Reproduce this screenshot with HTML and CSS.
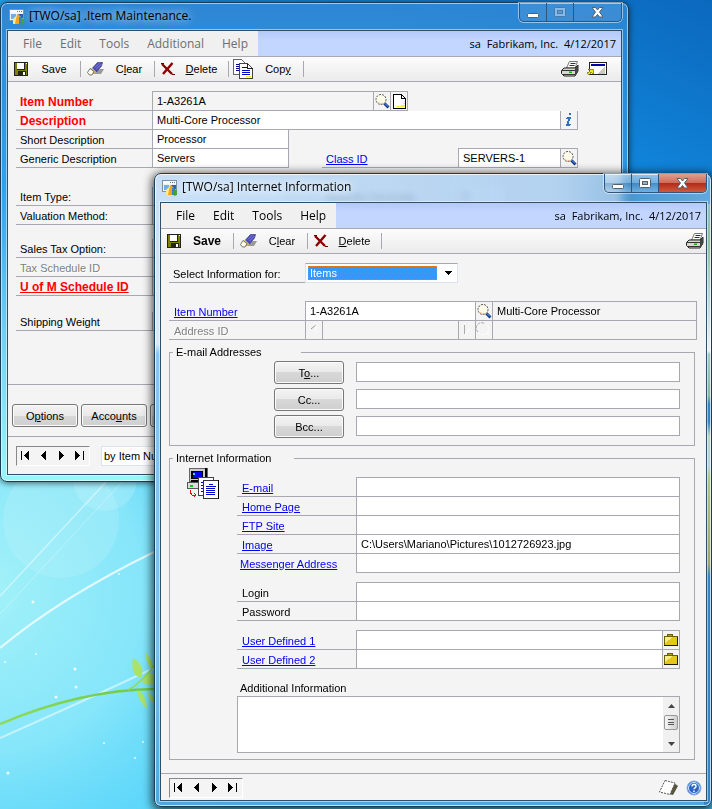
FILE: index.html
```html
<!DOCTYPE html>
<html lang="en">
<head>
<meta charset="utf-8">
<title>Item Maintenance</title>
<link rel="stylesheet" href="styles.css">
</head>
<body>
<svg class="defs" width="0" height="0" aria-hidden="true">
  <symbol id="i-app" viewBox="0 0 16 16">
    <rect x="0.5" y="0.5" width="14" height="11" fill="#e9f3fc" stroke="#7d90a4"/>
    <path d="M1 2.500h13" stroke="#fff" stroke-width="2"/><path d="M8 2.500h1M10 2.500h1M12 2.500h1" stroke="#5a7690"/>
    <rect x="2" y="5" width="5" height="5" fill="#6faee6"/>
    <path d="M4 15v-5l3-3v8z" fill="#ffe98a"/><path d="M6 15l2-10 3 1v9z" fill="#f6a41c"/>
    <path d="M10 15V8l3-1v8z" fill="#3b7fc8"/><path d="M12 16v-6h3v5z" fill="#3da23d"/><path d="M9 5h5v5z" fill="#2b5fa8"/>
  </symbol>
  <symbol id="i-save" viewBox="0 0 14 14" shape-rendering="crispEdges">
    <rect width="14" height="14" fill="#222"/><rect x="1" y="1" width="12" height="12" fill="#808000"/>
    <rect x="3" y="1" width="8" height="7" fill="#222"/><rect x="3" y="1" width="7" height="6" fill="#fff"/>
    <rect x="12" y="1" width="1" height="1" fill="#fff"/>
    <rect x="4" y="9" width="8" height="5" fill="#222"/><rect x="9" y="10" width="2" height="3" fill="#fff"/>
  </symbol>
  <symbol id="i-clear" viewBox="0 0 17 14">
    <path d="M5 12h9l3-5h-4z" fill="#999"/>
    <path d="M5.500 6L10.500.500h5l-1 3.500-5 6z" fill="#4c4cb8" stroke="#333380" stroke-width=".7"/>
    <path d="M8 5.500l5-5M9.500 7l5-5" stroke="#9c9ce0" stroke-width=".7"/>
    <path d="M4 6l5 4-1 2-6-3z" fill="#d8b040"/>
    <path d="M3 6.500l4 3L5 13H2.500L.5 10.500z" fill="#fffde8" stroke="#555" stroke-width=".8"/>
  </symbol>
  <symbol id="i-del" viewBox="0 0 14 14">
    <path d="M1 2l10 10M11.500 1L2 12" stroke="#8c0000" stroke-width="2.400" fill="none"/><path d="M0 1.500h3M11 12.500h3" stroke="#600"/>
  </symbol>
  <symbol id="i-copy" viewBox="0 0 20 20" shape-rendering="crispEdges">
    <path d="M.5.500h8l4 4v11H.5z" fill="#fff" stroke="#666"/>
    <path d="M3 5.500h3M3 7.500h3M3 9.500h3M3 11.500h3" stroke="#008"/>
    <path d="M6.500 4.500h8l5 5v10h-13z" fill="#fff" stroke="#444"/><path d="M14.500 4.500v5h5" fill="none" stroke="#222"/>
    <path d="M9 8.500h5M9 11.500h8M9 13.500h8M9 15.500h8" stroke="#00c"/><path d="M13 17.500h5" stroke="#fe3"/>
  </symbol>
  <symbol id="i-print" viewBox="0 0 18 16">
    <path d="M5.500 7L8.500.500h8L14 7z" fill="#fff" stroke="#777"/>
    <path d="M9.500 2.500h5M8.500 4.500h5" stroke="#22a"/>
    <path d="M3 7h11l3-3v6l-3 5H3L.5 12.500v-3z" fill="#d8d8d0" stroke="#222"/>
    <path d="M14 7l3-3v7l-3 4z" fill="#444"/><path d="M1 9.500h13M1 13.500h13" stroke="#333"/>
    <rect x="8" y="10.500" width="3" height="1.500" fill="#0b0"/>
  </symbol>
  <symbol id="i-goto" viewBox="0 0 20 14" shape-rendering="crispEdges">
    <rect x="2.500" y=".5" width="17" height="12" fill="#fff" stroke="#222"/>
    <rect x="4" y="2" width="14" height="2" fill="#00a"/><path d="M10 12l8-7v7z" fill="#c9c9c9"/>
    <path d="M1 7h5v5L4 10l-2 3-2-2 3-2z" fill="#f5e614" stroke="#660" stroke-width=".7"/>
  </symbol>
  <symbol id="i-look" viewBox="0 0 16 16">
    <circle cx="7" cy="6.500" r="5" fill="#fffbe9" stroke="#555" stroke-dasharray="2 1"/>
    <path d="M4 9.500a5 5 0 0 0 5 1" stroke="#f0b890" fill="none"/>
    <path d="M10.500 10.500l4 4" stroke="#123a8c" stroke-width="3"/><path d="M11 10.500l3 3" stroke="#6aa2f0"/>
  </symbol>
  <symbol id="i-note" viewBox="0 0 13 15" shape-rendering="crispEdges">
    <path d="M.5.500h8l4 4v10H.5z" fill="#fff" stroke="#000"/><path d="M8.500.500v4h4" fill="none" stroke="#000"/>
    <path d="M3 12.500h9M8 11.500h4M10 9.500h2M11 7.500h1" stroke="#ffee3a"/>
  </symbol>
  <symbol id="i-info" viewBox="0 0 8 14" shape-rendering="crispEdges">
    <path d="M4 0h2v2H4zM2 4h4v2H5v2H4v3h2v1H5v1H1v-2h1V8h1V6H1V5h1z" fill="#2e6fc4"/>
  </symbol>
  <symbol id="i-first" viewBox="0 0 10 10" shape-rendering="crispEdges"><path d="M0 0h1v9H0zM8 0v9L3 4.500z"/></symbol>
  <symbol id="i-prev" viewBox="0 0 10 10" shape-rendering="crispEdges"><path d="M7 0v9L2 4.500z"/></symbol>
  <symbol id="i-next" viewBox="0 0 10 10" shape-rendering="crispEdges"><path d="M2 0v9l5-4.500z"/></symbol>
  <symbol id="i-last" viewBox="0 0 10 10" shape-rendering="crispEdges"><path d="M8 0h1v9H8zM0 0v9l5-4.500z"/></symbol>
  <symbol id="i-folder" viewBox="0 0 14 12" shape-rendering="crispEdges">
    <path d="M3 3V1l1-1h4l1 2v1z" fill="#b5a000" stroke="#6b6000"/>
    <rect x=".5" y="2.500" width="13" height="9" fill="#e3c81c" stroke="#6b6000"/><path d="M1 9l8-6H1z" fill="#f6ec8a"/>
    <path d="M0 11.500h14M13.500 3v9" stroke="#221f00"/>
  </symbol>
  <symbol id="i-min" viewBox="0 0 13 11"><rect x=".5" y="6.500" width="11" height="4" rx="1" fill="#fff" stroke="#52606e"/></symbol>
  <symbol id="i-max" viewBox="0 0 13 11"><rect x=".5" y=".5" width="11" height="9" rx="1" fill="#fff" stroke="#52606e"/><rect x="3.500" y="3.500" width="5" height="3" fill="#8fb2d0" stroke="#52606e"/></symbol>
  <symbol id="i-close" viewBox="0 0 13 11"><path d="M1 .5h3.500l2 2.500 2-2.500H12L8.500 5l3.500 5H8.500l-2-2.500-2 2.500H1L4.500 5z" fill="#fff" stroke="#52606e"/></symbol>
</svg>

<svg class="wallpaper" viewBox="0 0 712 809" preserveAspectRatio="xMidYMid slice" aria-hidden="true">
  <defs>
    <linearGradient id="sky" x1="1" y1="0" x2=".55" y2="1"><stop offset="0" stop-color="#0b68bd"/><stop offset=".25" stop-color="#1189de"/><stop offset=".55" stop-color="#3fbdf2"/><stop offset="1" stop-color="#54d2fa"/></linearGradient>
    <radialGradient id="glow" gradientUnits="userSpaceOnUse" cx="-20" cy="590" r="330"><stop offset="0" stop-color="#a4f2f8"/><stop offset=".5" stop-color="#8be8fa" stop-opacity=".9"/><stop offset="1" stop-color="#66dcfa" stop-opacity="0"/></radialGradient>
    <linearGradient id="stem" x1="0" x2="1"><stop offset="0" stop-color="#8edb5c"/><stop offset="1" stop-color="#6fc644"/></linearGradient>
  </defs>
  <rect width="712" height="809" fill="url(#sky)"/>
  <rect width="712" height="809" fill="url(#glow)"/>
  <circle cx="61" cy="520" r="58" fill="#c5f4fb" opacity=".25"/><circle cx="105" cy="479" r="32" fill="#d0f8fc" opacity=".25"/>
  <g fill="none" stroke="#fff">
    <path d="M0 596L106 482" opacity=".45" stroke-width="1.500"/><path d="M0 614L122 482" opacity=".3"/>
    <path d="M0 648Q60 598 154 552" opacity=".75" stroke-width="2"/>
    <path d="M0 738Q75 705 154 668" opacity=".5" stroke-width="2"/>
  </g>
  <path d="M0 724Q80 690 155 689" fill="none" stroke="url(#stem)" stroke-width="2.500"/>
  <g fill="#a9e36a"><path d="M133 658q13 8 8 20-11-3-8-20zM145 652q10 10 8 17-7-3-8-17zM142 682q2-12 12-8v10q-8 2-12-2zM137 690q9 3 10 19-8-6-10-19zM147 692q6 1 8 12-6-3-8-12z"/></g>
  <path d="M128 690q12-6 26-24" fill="none" stroke="#8edb5c" stroke-width="1.500"/>
  <g fill="#fff" opacity=".85"><circle cx="33" cy="602" r="1.500"/><circle cx="75" cy="669" r="1.500"/><circle cx="76" cy="687" r="1.500"/><circle cx="56" cy="697" r="1.500"/><circle cx="5" cy="662" r="1"/><circle cx="119" cy="574" r="1"/><circle cx="104" cy="743" r="1"/><circle cx="135" cy="758" r="1"/><circle cx="36" cy="654" r="1"/><circle cx="8" cy="773" r="1.500"/><circle cx="143" cy="742" r="1"/></g>
</svg>

<section class="window back">
  <header class="title">
    <svg class="app"><use href="#i-app"/></svg><h1>[TWO/sa] .Item Maintenance.</h1>
    <div class="caption">
      <button aria-label="Minimize"><svg><use href="#i-min"/></svg></button><button aria-label="Maximize" disabled><svg><use href="#i-max"/></svg></button><button class="x" aria-label="Close"><svg><use href="#i-close"/></svg></button>
    </div>
  </header>
  <div class="client">
    <div class="menubar">
      <nav><button>File</button><button>Edit</button><button>Tools</button><button>Additional</button><button>Help</button></nav>
      <p>sa&nbsp; Fabrikam, Inc.&nbsp; 4/12/2017</p>
    </div>
    <div class="toolbar">
      <button><svg class="s14"><use href="#i-save"/></svg><span>Save</span></button>
      <button><svg class="s17"><use href="#i-clear"/></svg><span>C<u>l</u>ear</span></button>
      <button><svg class="s14"><use href="#i-del"/></svg><span><u>D</u>elete</span></button>
      <button class="copy"><svg class="s20"><use href="#i-copy"/></svg><span>Cop<u>y</u></span></button>
      <div class="right"><button aria-label="Print"><svg class="s18"><use href="#i-print"/></svg></button><button aria-label="Go to"><svg class="goto"><use href="#i-goto"/></svg></button></div>
    </div>
    <form class="item">
      <div class="row first"><label class="req" for="num">Item Number</label><input id="num" class="w-num gray" value="1-A3261A"><button type="button" aria-label="Lookup"><svg class="s16"><use href="#i-look"/></svg></button><button type="button" aria-label="Note"><svg class="note"><use href="#i-note"/></svg></button></div>
      <div class="row"><label class="req" for="desc">Description</label><input id="desc" class="w-desc" value="Multi-Core Processor"><button type="button" aria-label="Information"><svg class="info"><use href="#i-info"/></svg></button></div>
      <div class="row"><label for="short">Short Description</label><input id="short" class="w-short" value="Processor"></div>
      <div class="row"><label for="gen">Generic Description</label><input id="gen" class="w-short" value="Servers"><span class="gap"></span><label for="cls"><a href="#">Class ID</a></label><input id="cls" class="w-class top" value="SERVERS-1"><button type="button" class="top" aria-label="Class lookup"><svg class="s16"><use href="#i-look"/></svg></button></div>
      <div class="row space"><label for="type">Item Type:</label><input id="type" class="w-short" value=""><span class="gap"></span><label for="qd">Quantity Decimals:</label><input id="qd" class="w-qd" value="0"></div>
      <div class="row"><label for="val">Valuation Method:</label><input id="val" class="w-short"></div>
      <div class="row mid"><label for="tax">Sales Tax Option:</label><input id="tax" class="w-short"></div>
      <div class="row"><label class="dim" for="sched">Tax Schedule ID</label><input id="sched" class="w-short" disabled></div>
      <div class="row"><label class="req" for="uom"><a href="#">U of M Schedule ID</a></label><input id="uom" class="w-short"></div>
      <div class="row ship"><label for="ship">Shipping Weight</label><input id="ship" class="w-short"></div>
    </form>
    <div class="actions"><button class="push">O<u>p</u>tions</button><button class="push">Acco<u>u</u>nts</button><button class="push"></button></div>
    <footer class="status">
      <div class="pager"><button aria-label="First"><svg><use href="#i-first"/></svg></button><button aria-label="Previous"><svg><use href="#i-prev"/></svg></button><button aria-label="Next"><svg><use href="#i-next"/></svg></button><button aria-label="Last"><svg><use href="#i-last"/></svg></button></div>
      <select class="sort" aria-label="Sort"><option>by Item Number</option></select>
    </footer>
  </div>
</section>

<section class="window front">
  <header class="title">
    <svg class="app"><use href="#i-app"/></svg><h1>[TWO/sa] Internet Information</h1>
    <div class="caption">
      <button aria-label="Minimize"><svg><use href="#i-min"/></svg></button><button aria-label="Maximize"><svg><use href="#i-max"/></svg></button><button class="x" aria-label="Close"><svg><use href="#i-close"/></svg></button>
    </div>
  </header>
  <div class="client">
    <div class="menubar">
      <nav><button>File</button><button>Edit</button><button>Tools</button><button>Help</button></nav>
      <p>sa&nbsp; Fabrikam, Inc.&nbsp; 4/12/2017</p>
    </div>
    <div class="toolbar">
      <button class="strong"><svg class="s14"><use href="#i-save"/></svg><span>Save</span></button>
      <button><svg class="s17"><use href="#i-clear"/></svg><span>C<u>l</u>ear</span></button>
      <button><svg class="s14"><use href="#i-del"/></svg><span><u>D</u>elete</span></button>
      <div class="right"><button aria-label="Print"><svg class="s18"><use href="#i-print"/></svg></button></div>
    </div>
    <form class="net">
      <div class="row choose"><label for="for">Select Information for:</label><span class="combo"><select id="for"><option>Items</option></select><svg viewBox="0 0 7 4" shape-rendering="crispEdges"><path d="M0 0h7L3.500 4z"/></svg></span></div>
      <div class="row item-row"><label for="inum"><a href="#">Item Number</a></label><input id="inum" class="w-item" value="1-A3261A"><button type="button" aria-label="Lookup"><svg class="s16"><use href="#i-look"/></svg></button><output class="grow">Multi-Core Processor</output></div>
      <div class="row"><label class="dim" for="addr">Address ID</label><button type="button" disabled aria-label="Previous address"><svg class="s16" viewBox="0 0 16 16"><path d="M5 7l5-4" stroke="#999"/><path d="M10 3v8" stroke="#fff"/></svg></button><input id="addr" class="w-addr gray" disabled><button type="button" disabled aria-label="Next address"><svg class="s16" viewBox="0 0 16 16"><path d="M5.500 3v9" stroke="#aaa"/><path d="M6 12l5-5" stroke="#fff"/></svg></button><button type="button" disabled aria-label="Address lookup"><svg class="s16" viewBox="0 0 16 16" fill="none"><path d="M2 10a5 5 0 0 1 7-8" stroke="#aaa" stroke-dasharray="3 1"/><path d="M11 3a5 5 0 0 1-8 8m8 0l3 3" stroke="#fff" stroke-dasharray="3 1"/></svg></button><output class="grow"></output></div>

      <fieldset class="mail">
        <legend>E-mail Addresses</legend>
        <div class="addr"><button type="button" class="push">T<u>o</u>...</button><input aria-label="To"></div>
        <div class="addr"><button type="button" class="push">Cc...</button><input aria-label="Cc"></div>
        <div class="addr"><button type="button" class="push">Bcc...</button><input aria-label="Bcc"></div>
      </fieldset>

      <fieldset class="web">
        <legend>Internet Information</legend>
        <div class="cols">
        <svg class="pc" viewBox="0 0 32 32" shape-rendering="crispEdges">
          <path d="M3 1h17v13H2V3z" fill="#ccc" stroke="#666"/><path d="M19 1v13H4" fill="none" stroke="#000" stroke-width="2"/>
          <rect x="4" y="4" width="12" height="8" fill="#000"/><rect x="6" y="5" width="9" height="6" fill="#00e"/><rect x="6" y="6" width="2" height="2" fill="#2dd"/>
          <rect x="0" y="15" width="18" height="6" fill="#ddd" stroke="#555"/><rect x="3" y="18" width="3" height="2" fill="#0c0"/>
          <rect x="11.500" y="10.500" width="15" height="18" fill="#fff" stroke="#444"/><path d="M14 15.500h3M14 18.500h3M14 21.500h3M14 24.500h3" stroke="#00c"/>
          <rect x="16.500" y="13.500" width="15" height="18" fill="#fff" stroke="#333"/><path d="M31.500 13v19H16" fill="none" stroke="#000"/>
          <path d="M22 17.500h4M19 19.500h10M19 21.500h9M19 23.500h9M19 25.500h9M19 27.500h9" stroke="#00c"/>
          <path d="M4 23l-1 2 2 3h4M7 26l2 2-2 2" fill="none" stroke="#e00"/>
        </svg>
        <div class="fields">
          <div class="row first"><label for="em"><a href="#">E-mail</a></label><input id="em" class="grow"></div>
          <div class="row"><label for="hp"><a href="#">Home Page</a></label><input id="hp" class="grow"></div>
          <div class="row"><label for="ftp"><a href="#">FTP Site</a></label><input id="ftp" class="grow"></div>
          <div class="row"><label for="img"><a href="#">Image</a></label><input id="img" class="grow" value="C:\Users\Mariano\Pictures\1012726923.jpg"></div>
          <div class="row plain"><label for="msg"><a href="#">Messenger Address</a></label><input id="msg" class="grow"></div>
          <div class="row first sep"><label for="log">Login</label><input id="log" class="grow"></div>
          <div class="row"><label for="pw">Password</label><input id="pw" type="password" class="grow"></div>
          <div class="row first sep"><label for="u1"><a href="#">User Defined 1</a></label><input id="u1" class="grow"><button type="button" aria-label="Browse 1"><svg class="folder"><use href="#i-folder"/></svg></button></div>
          <div class="row"><label for="u2"><a href="#">User Defined 2</a></label><input id="u2" class="grow"><button type="button" aria-label="Browse 2"><svg class="folder"><use href="#i-folder"/></svg></button></div>
          <label class="more" for="add">Additional Information</label>
          <div class="memo"><textarea id="add"></textarea>
            <div class="scroll" aria-hidden="true"><svg viewBox="0 0 7 4"><path d="M0 4h7L3.500 0z"/></svg><span><i></i><i></i><i></i></span><svg viewBox="0 0 7 4"><path d="M0 0h7L3.500 4z"/></svg></div>
          </div>
        </div>
        </div>
      </fieldset>
    </form>
    <footer class="status">
      <div class="pager"><button aria-label="First"><svg><use href="#i-first"/></svg></button><button aria-label="Previous"><svg><use href="#i-prev"/></svg></button><button aria-label="Next"><svg><use href="#i-next"/></svg></button><button aria-label="Last"><svg><use href="#i-last"/></svg></button></div>
      <div class="right">
        <button aria-label="Record note"><svg class="page" viewBox="0 0 19 16"><path d="M15 3l4 3-5 9-4-1z" fill="#555540"/><path d="M6 .5l10 2.500-5 11.500L.5 12z" fill="#fff" stroke="#555" stroke-dasharray="2 1"/></svg></button>
        <button aria-label="Help"><svg class="help" viewBox="0 0 16 16"><circle cx="8" cy="8" r="7" fill="#2765c8" stroke="#8fb4e8"/><circle cx="8" cy="8" r="5.500" fill="none" stroke="#dbe8fa"/><path d="M6 6.500q0-2 2-2t2 1.700q0 1-1 1.600t-1 1.400M8 10.500v1.500" fill="none" stroke="#fff" stroke-width="1.500"/></svg></button>
      </div>
    </footer>
  </div>
</section>
</body>
</html>
```
FILE: styles.css
```css
* { box-sizing: border-box; }
body {
  margin: 0;
  min-height: 100vh;
  position: relative;
  overflow: hidden;
  font: 11px/14px "Liberation Sans", Arial, sans-serif;
  color: #000;
  background: #54d2fa;
}
h1, p { margin: 0; font-weight: normal; }
button, input, select, textarea { font: inherit; color: inherit; margin: 0; border-radius: 0; }
button { background: none; border: 0; padding: 0; }
svg { display: block; flex: none; }
a { color: #0000f0; text-decoration: underline; }
.defs { position: absolute; }
.wallpaper { position: absolute; inset: 0; width: 100%; height: 100%; }

/* Windows on the desktop */
.window {
  position: absolute;
  border: 1px solid #1b3c55;
  border-radius: 7px;
  padding: 0 6px 6px;
}
.back {
  left: 0; right: 83px; top: 2px;
  background: linear-gradient(90deg, transparent 60%, rgba(30,120,200,.25)), linear-gradient(#2f86d3, #2d8cd9 40px, #2fa3ee 190px, #6fd0f5 330px, #9af6f8);
  box-shadow: inset 0 0 0 1px rgba(255,255,255,.55), 0 1px 6px rgba(0,0,0,.6);
}
.front {
  left: 154px; right: 0; top: 173px;
  padding: 0 4px 5px 5px;
  background:
    linear-gradient(90deg, rgba(190,218,245,.8), rgba(160,200,238,.75) 72%, rgba(85,155,212,.6) 86%, rgba(120,175,220,.7)) 0 0 / 100% 30px no-repeat,
    linear-gradient(transparent 30px, #8fc0c8 30px, #8fc0a4 70px, #b9dce8 130px, #e9f2fa 177px, #9fcbd0 180px, #84b8a8 222px, #2f86c9 230px, #2f86c9 248px, #b4d6c8 262px, #b0d4e8 292px, #a8cc88 302px, #98a868 390px, #2f86c9 402px) 100% 0 / 7px 100% no-repeat,
    linear-gradient(rgba(200,222,245,.2) 30px, #c9dff4 30px, #dbe9f6 170px, #8cc4ee 180px, #7abfe9 480px, #4ea6dc);
  backdrop-filter: blur(3px);
  box-shadow: inset 0 0 0 1px rgba(255,255,255,.7), 0 2px 10px 2px rgba(0,0,0,.7);
}
.title { display: flex; align-items: flex-start; height: 27px; padding-left: 2px; }
.front .title { height: 28px; }
.title .app { width: 16px; height: 16px; margin: 6px 4px 0 0; }
.title h1 { flex: 1; font: 12px/16px "Open Sans", sans-serif; margin-top: 5px; white-space: nowrap; text-shadow: 0 0 8px #fff, 0 0 10px rgba(255,255,255,.8); }
.back .title h1 { text-shadow: 0 0 8px rgba(255,255,255,.7), 0 0 12px rgba(255,255,255,.6); }
.caption { display: flex; border: 1px solid #2d567c; border-top: 0; border-radius: 0 0 5px 5px; overflow: hidden; box-shadow: 0 0 0 1px rgba(255,255,255,.5); }
.caption button { width: 27px; height: 18px; display: grid; place-items: center; border-right: 1px solid #2d567c; background: linear-gradient(rgba(255,255,255,.4), rgba(255,255,255,.2) 50%, rgba(0,50,100,.15) 50%, rgba(255,255,255,.2)); }
.caption .x { width: 47px; border-right: 0; }
.front .caption .x { background: linear-gradient(#e0a090, #cf6a58 50%, #b02a18 50%, #cf5a3c); }
.caption svg { width: 13px; height: 11px; }
.back .caption button { background: rgba(255,255,255,.08); }
.caption button:disabled svg { opacity: .4; }
.client { border: 1px solid #2f4f68; background: #f4f4f4; box-shadow: 0 0 0 1px rgba(255,255,255,.5); }

.menubar { display: flex; height: 26px; border-bottom: 1px solid #a8a8b0; background: linear-gradient(#b3c9fa, #c3d6ff 40%); font: 12px/24px "Open Sans", sans-serif; }
.menubar nav { display: flex; gap: 18px; padding: 0 10px 0 15px; background: #f0f0f0; }
.back .menubar nav { color: #6e6e6e; }
.menubar p { margin-left: auto; padding: 1px 5px 0 0; font-size: 11px; }

.toolbar { display: flex; align-items: center; height: 25px; padding-left: 6px; border-bottom: 1px solid #a8a8b0; background: linear-gradient(#fcfcfc, #ebebeb); }
.toolbar > button { display: flex; align-items: center; height: 16px; width: 74px; border-right: 1px solid #a8a8b0; padding-left: 6px; }
.toolbar > button:first-child { width: 67px; padding-left: 0; }
.toolbar > button span { flex: 1; text-align: center; }
.toolbar > .copy { width: 75px; padding-left: 4px; }
.toolbar .strong { font-weight: bold; font-size: 12px; }
.s14 { width: 14px; height: 14px; }
.s16 { width: 16px; height: 16px; }
.s17 { width: 17px; height: 14px; }
.s18 { width: 18px; height: 16px; }
.s20 { width: 20px; height: 20px; }
.goto { width: 20px; height: 14px; }
.note { width: 13px; height: 15px; }
.info { width: 8px; height: 14px; }
.folder { width: 14px; height: 12px; }
.right { display: flex; align-items: center; gap: 8px; margin-left: auto; }
.toolbar .right { padding-right: 14px; }
.front .toolbar .right { padding-right: 2px; }

/* Field rows */
.row { display: flex; height: 19px; }
.row.first { height: 20px; }
.row > * { border: 0 solid #a8a8b0; border-bottom-width: 1px; }
.row label { flex: 0 0 136px; padding: 3px 0 0 4px; white-space: nowrap; }
.row.first label { padding-top: 4px; }
.row input, .row output { min-width: 0; padding: 0 4px 1px; background-color: #fff; border-left-width: 1px; outline: 0; }
.row.first > :not(label), .row .top, .item-row > :not(label) { border-top-width: 1px; }
.row > button { flex: 0 0 17px; display: grid; place-items: center; border-left-width: 1px; overflow: hidden; }
.row > button:last-child, .row > input:last-child, .row > output:last-child, .row > .w-short { border-right-width: 1px; }
.row > button:last-child { flex-basis: 18px; }
.row .gray, .row output { background-color: #f4f4f4; }
.row .grow { flex: 1; }
.row output { padding-top: 2px; }
.row .gap { flex: 0 0 33px; border: 0; }
.row .top { height: 20px; margin-top: -1px; }
.req, .row .req { font-weight: bold; font-size: 12px; color: #f00; }
.req a { color: #f00; }
.dim { color: #808080; text-shadow: 1px 1px #fff; }
.w-num { width: 221px; } .w-desc { width: 408px; } .w-short { width: 137px; } .w-class { width: 102px; } .w-qd { width: 50px; }
.w-item { width: 170px; } .w-addr { width: 136px; }

.item { padding: 9px 8px 53px; }
.space { margin-top: 19px; }
.mid { margin-top: 14px; }
.ship { margin-top: 16px; }
.actions { display: flex; gap: 3px; border-top: 1px solid #a8a8b0; padding: 19px 4px 9px; }
.push { flex: 0 0 66px; height: 23px; border: 1px solid #777; border-radius: 3px; background: linear-gradient(#f3f3f3, #e9e9e9 50%, #d8d8d8 50%, #cfcfcf); box-shadow: inset 0 0 0 1px #fbfbfb; }
.status { display: flex; border-top: 1px solid #a8a8b0; padding: 9px 8px 8px; }
.pager { display: flex; width: 74px; height: 20px; border: 1px solid; border-color: #888 #fff #fff #888; }
.pager button { flex: 1; display: grid; place-items: center; }
.pager svg { width: 10px; height: 10px; }
.sort { appearance: none; margin-left: 11px; width: 137px; height: 20px; border: 1px solid #dde3ee; background: #fff; padding: 0 2px; }

/* Internet Information window */
.net { padding: 9px 11px 13px 8px; }
.choose { height: 20px; }
.choose label { padding-top: 4px; }
.row .combo { display: flex; align-items: center; width: 153px; padding: 1px 5px 1px 2px; border: 1px solid #dde3ee; border-top-color: #a8a8b0; background: #fff; }
.combo select { appearance: none; flex: 1; height: 14px; border: 1px dotted #e08020; background: #3399ff; color: #fff; padding: 0 1px; line-height: 12px; }
.combo svg { width: 7px; height: 4px; margin-left: 8px; }
.item-row { margin-top: 18px; height: 20px; }
.net > .row:not(.choose) { margin-right: -2px; }
.item-row label { padding-top: 4px; }
.item-row label, .item-row + .row label { padding-left: 5px; }
fieldset { margin: 0; padding: 0; border: 1px solid #a8a8b0; min-width: 0; }
legend { padding: 0 0 0 3px; margin-left: 3px; width: 128px; line-height: 14px; }
.mail { margin-top: 5px; padding: 2px 0 7px; }
.addr { display: flex; align-items: flex-start; gap: 12px; padding: 0 14px 0 104px; }
.addr + .addr { margin-top: 4px; }
.addr .push { flex-basis: 70px; }
.addr input { flex: 1; min-width: 0; height: 20px; margin-top: 1px; border: 1px solid #a8a8b0; padding: 0 4px; }
.web { margin-top: 5px; padding: 2px 0 6px; }
.web legend { width: 121px; }
.cols { display: flex; align-items: flex-start; gap: 18px; padding: 0 14px 0 17px; }
.pc { width: 32px; height: 32px; }
.fields { flex: 1; padding-top: 10px; min-width: 0; }
.fields .row label { flex-basis: 119px; padding-left: 5px; }
.fields .plain label { padding-left: 3px; border: 0; }
.fields .sep { margin-top: 9px; }
.more { display: block; padding: 12px 0 1px 3px; }
.memo { display: flex; height: 57px; border: 1px solid #a8a8b0; background: #fff; }
.memo textarea { flex: 1; border: 0; resize: none; overflow: hidden; outline: 0; background: none; }
.scroll { width: 16px; background: #f0f0f0; display: flex; flex-direction: column; align-items: center; padding: 7px 0 6px; }
.scroll svg { width: 7px; height: 4px; fill: #444; }
.scroll span { width: 14px; height: 15px; margin: 7px 0 auto; padding: 3px; border: 1px solid #999; border-radius: 2px; background: linear-gradient(90deg, #f5f5f5, #d0d0d0); display: grid; gap: 1px; }
.scroll i { height: 1px; background: #555; }
.front .status { padding: 4px 4px 2px 8px; }
.page { width: 19px; height: 16px; }
.help { width: 16px; height: 16px; }
```
